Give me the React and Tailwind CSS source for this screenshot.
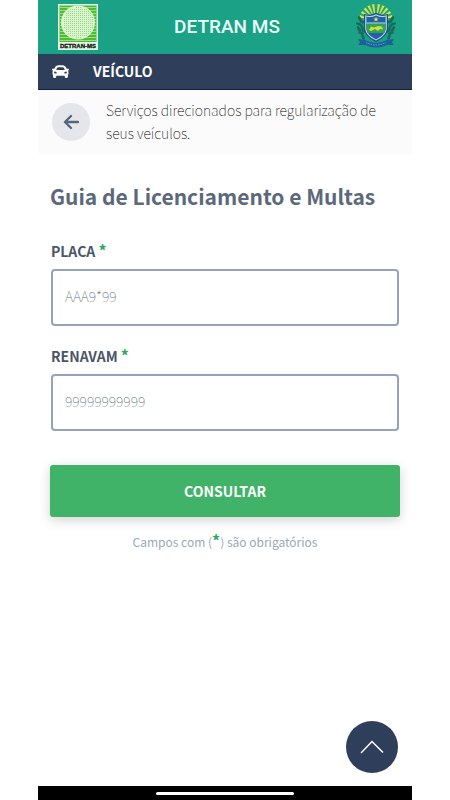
import React from 'react';
import { FaCar } from 'react-icons/fa';

const stripes = [2, 5, 8, 11, 14, 17, 20, 23, 26, 29, 32, 35];

const dots = [];
for (let x = 4; x <= 36; x += 2) {
  for (let y = 3; y <= 33; y += 2) {
    if ((x - 20) ** 2 + (y - 18) ** 2 < 240) dots.push([x, y]);
  }
}

const rays = [-74, -58, -42, -26, -10, 10, 26, 42, 58, 74];

const leaves = [
  [4, 15, 60], [3, 20, 20], [3, 25, 60], [5, 29, 20], [7, 33, 70], [7, 18, 10], [6, 23, 70], [8, 27, 30],
];

function DetranLogo() {
  return (
    <svg viewBox="0 0 40 46" className="h-[46px] w-10" role="img" aria-label="DETRAN-MS">
      <rect width="40" height="46" fill="#e4f8e4" />
      <rect x="1.5" y="1.5" width="37" height="36.5" fill="#4dbb35" />
      {stripes.map((y) => (
        <rect key={y} x="2" y={y + 1} width="36" height="0.8" fill="#b5e6a4" />
      ))}
      <circle cx="20" cy="18.5" r="17" fill="#dcf6d2" />
      {dots.map(([x, y]) => (
        <circle key={`${x}-${y}`} cx={x + 0.5} cy={y + 0.5} r="0.6" fill="#8ed475" />
      ))}
      <text x="20" y="44.4" textAnchor="middle" fontFamily="Liberation Sans, Arial, sans-serif" fontWeight="700" fontSize="6" fill="#10180f" stroke="#10180f" strokeWidth="0.3">
        DETRAN-MS
      </text>
    </svg>
  );
}

function StateEmblem() {
  return (
    <svg viewBox="0 0 40 46" className="h-[46px] w-10" role="img" aria-label="Brasão de Mato Grosso do Sul">
      {rays.map((a) => (
        <path key={a} d="M19.5 9 L18.7 0 L21.3 0 L20.5 9 Z" fill="#d9e43c" transform={`rotate(${a} 20 17)`} />
      ))}
      {leaves.map(([x, y, a]) => (
        <g key={`${x}-${y}`} fill="#176b58">
          <ellipse cx={x} cy={y} rx="3.2" ry="1.4" transform={`rotate(${a} ${x} ${y})`} />
          <ellipse cx={40 - x} cy={y} rx="3.2" ry="1.4" transform={`rotate(${-a} ${40 - x} ${y})`} />
        </g>
      ))}
      <path d="M8 10 Q14 12 20 9 Q26 12 32 10 V25 Q31 33 20 38 Q9 33 8 25 Z" fill="#1d4f94" />
      <path d="M9.2 11.3 Q15 13 20 10.3 Q25 13 30.8 11.3 V25 Q30 32 20 36.6 Q10 32 9.2 25 Z" fill="#bcdde0" />
      <path d="M10.4 12.6 Q15 14 20 11.6 Q25 14 29.6 12.6 V25 Q29 31 20 35.4 Q11 31 10.4 25 Z" fill="#2460a8" />
      <path d="M10.4 19.5 H29.6 V25 Q29.3 27 28 29 H12 Q10.7 27 10.4 25 Z" fill="#2ea35a" />
      <path d="M10.4 19 H29.6" stroke="#bcdde0" strokeWidth="1" />
      <path d="M13 26 L15 22.5 L18 23.5 L22 22 L26 22.5 L27 25.5 L24 25 L22 27 L19 25 L15 27 Z" fill="#d5dc3a" />
      <path d="M20 12.8 L20.7 14.4 L22.4 14.6 L21.1 15.7 L21.5 17.4 L20 16.5 L18.5 17.4 L18.9 15.7 L17.6 14.6 L19.3 14.4 Z" fill="#e9ec3e" />
      <path d="M2 35 L9 36 Q20 42 31 36 L38 35 L36 38.5 L38 41 L31 41 Q20 46 9 41 L2 41 L4 38.5 Z" fill="#1d5f9e" />
      <path d="M10 38.5 Q20 43.5 30 38.5" fill="none" stroke="#6fa9cb" strokeWidth="1" strokeDasharray="1.5 1" />
    </svg>
  );
}

function Field({ id, label, placeholder }) {
  return (
    <div className="flex flex-col gap-2">
      <label htmlFor={id} className="h-5 text-sm leading-5 font-bold text-[#4a5568]">
        {label} <span className="text-base leading-none text-[#2fa866]">*</span>
      </label>
      <input
        id={id}
        type="text"
        required
        placeholder={placeholder}
        className="h-[57px] w-full rounded border-2 border-[#94a3bb] bg-white px-3 pb-1 text-sm font-thin text-[#4a5568] outline-none placeholder:text-[#65707c]"
      />
    </div>
  );
}

export default function App() {
  return (
    <div className="min-h-screen bg-white px-[38px] font-['Noto_Sans_CJK_SC','Noto_Sans',sans-serif]">
      <div className="flex min-h-screen flex-col">
        <header className="grid h-[54px] grid-cols-[1fr_auto_1fr] items-center bg-[#1aa186] pr-4 pl-5">
          <DetranLogo />
          <h1 className="font-[Roboto,sans-serif] text-[19px] font-medium text-[#eafff9]">DETRAN MS</h1>
          <div className="flex justify-end">
            <StateEmblem />
          </div>
        </header>

        <div className="flex h-9 items-center gap-6 border-b border-[#14213f] bg-[#2f3e5b] px-[14px] text-white">
          <FaCar className="size-[17px]" aria-hidden="true" />
          <h2 className="pb-0.5 text-sm font-bold">VEÍCULO</h2>
        </div>

        <div className="flex h-16 items-center gap-4 bg-[#fbfbfb] px-[14px]">
          <button type="button" aria-label="Voltar" className="flex size-[38px] shrink-0 items-center justify-center rounded-full bg-[#e4e6eb]">
            <svg viewBox="0 0 16 16" className="size-4" fill="none" stroke="#56657a" strokeWidth="2.3" strokeLinecap="round" strokeLinejoin="round">
              <path d="M8 2 L2 8 L8 14 M2 8 H15" />
            </svg>
          </button>
          <p className="text-sm leading-[23px] font-thin text-black">
            Serviços direcionados para regularização de seus veículos.
          </p>
        </div>

        <main className="flex-1 px-3 pt-[26px]">
          <h3 className="text-[21px] leading-8 font-bold text-[#5c687b]">Guia de Licenciamento e Multas</h3>
          <form onSubmit={(e) => e.preventDefault()}>
            <div className="mt-[29px] flex flex-col gap-5 px-px">
              <Field id="placa" label="PLACA" placeholder="AAA9*99" />
              <Field id="renavam" label="RENAVAM" placeholder="99999999999" />
            </div>
            <button type="submit" className="mt-[34px] h-[52px] w-full rounded-[3px] bg-[#40b368] text-sm font-bold text-white shadow-[0_3px_12px_rgba(0,0,0,0.18)]">
              CONSULTAR
            </button>
          </form>
          <p className="mt-[15px] text-center text-xs leading-5 text-[#9aa7b9]">
            Campos com (<span className="text-base leading-none font-bold text-[#2fa866]">*</span>) são obrigatórios
          </p>
        </main>

        <div className="flex justify-end px-[14px] pb-[13px]">
          <button type="button" aria-label="Voltar ao topo" className="flex size-[52px] items-center justify-center rounded-full bg-[#2f3e5b]">
            <svg viewBox="0 0 24 14" className="h-[14px] w-6" fill="none" stroke="white" strokeWidth="1.5">
              <path d="M1 13 L12 1.5 L23 12.5" />
            </svg>
          </button>
        </div>

        <footer className="flex h-[14px] items-center justify-center bg-black">
          <div className="h-[3px] w-[138px] rounded-full bg-white" />
        </footer>
      </div>
    </div>
  );
}
